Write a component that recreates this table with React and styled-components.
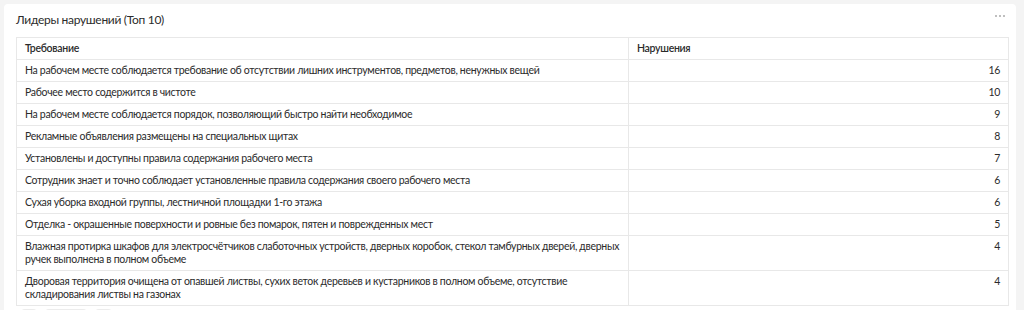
import React from 'react';
import styled, { createGlobalStyle } from 'styled-components';

const rows = [
  ['На рабочем месте соблюдается требование об отсутствии лишних инструментов, предметов, ненужных вещей', 16],
  ['Рабочее место содержится в чистоте', 10],
  ['На рабочем месте соблюдается порядок, позволяющий быстро найти необходимое', 9],
  ['Рекламные объявления размещены на специальных щитах', 8],
  ['Установлены и доступны правила содержания рабочего места', 7],
  ['Сотрудник знает и точно соблюдает установленные правила содержания своего рабочего места', 6],
  ['Сухая уборка входной группы, лестничной площадки 1-го этажа', 6],
  ['Отделка - окрашенные поверхности и ровные без помарок, пятен и поврежденных мест', 5],
  ['Влажная протирка шкафов для электросчётчиков слаботочных устройств, дверных коробок, стекол тамбурных дверей, дверных ручек выполнена в полном объеме', 4],
  ['Дворовая территория очищена от опавшей листвы, сухих веток деревьев и кустарников в полном объеме, отсутствие складирования листвы на газонах', 4],
];

function App() {
  return (
    <>
      <GlobalStyle />
      <Page>
        <Card>
          <Header>
            <Title>Лидеры нарушений (Топ 10)</Title>
            <MoreButton width="12" height="4" viewBox="0 0 12 4">
              <circle cx="2" cy="2" r="1" />
              <circle cx="6" cy="2" r="1" />
              <circle cx="10" cy="2" r="1" />
            </MoreButton>
          </Header>
          <Table>
            <thead>
              <tr>
                <Th>Требование</Th>
                <Th>Нарушения</Th>
              </tr>
            </thead>
            <tbody>
              {rows.map(([name, count]) => (
                <tr key={name}>
                  <Td>{name}</Td>
                  <Td $num>{count}</Td>
                </tr>
              ))}
            </tbody>
          </Table>
          <Pager>
            <PageBtn $w={16} />
            <PageBtn $w={42} />
            <PageBtn $w={17} />
          </Pager>
        </Card>
      </Page>
    </>
  );
}

export default App;

const GlobalStyle = createGlobalStyle`
  body {
    margin: 0;
    background: #f4f4f4;
    font-family: Lato, "Noto Sans", sans-serif;
    color: #2b2b2b;
  }
`;

const Page = styled.div`
  padding: 4px 8px 0 4px;
  height: 310px;
  overflow: hidden;
  box-sizing: border-box;
`;

const Card = styled.div`
  background: #fff;
  border-radius: 4px;
  padding: 8px 7px 0 12px;
  min-height: 320px;
`;

const Header = styled.div`
  display: flex;
  justify-content: space-between;
  align-items: flex-start;
  height: 25px;
`;

const Title = styled.div`
  font-size: 12px;
  line-height: 16px;
  letter-spacing: -0.3px;
  color: #2b2b2b;
`;

const MoreButton = styled.svg`
  fill: #aaa;
  margin: 2px 3px 0 0;
`;

const Table = styled.table`
  width: 100%;
  border-collapse: collapse;
  font-size: 10.5px;
  line-height: 13px;
  letter-spacing: -0.3px;
  border: 1px solid #e8e8e8;
`;

const Th = styled.th`
  text-align: left;
  font-weight: 600;
  padding: 4px 8px;
  border: 1px solid #e8e8e8;
  &:first-child { width: 595px; }
`;

const Td = styled.td`
  padding: 4px 8px;
  border: 1px solid #e8e8e8;
  vertical-align: top;
  text-align: ${(p) => (p.$num ? 'right' : 'left')};
`;

const Pager = styled.div`
  display: flex;
  gap: 8px;
  padding: 3px 0 0 5px;
`;

const PageBtn = styled.div`
  width: ${(p) => p.$w}px;
  height: 16px;
  border-radius: 4px;
  background: #ececec;
`;
